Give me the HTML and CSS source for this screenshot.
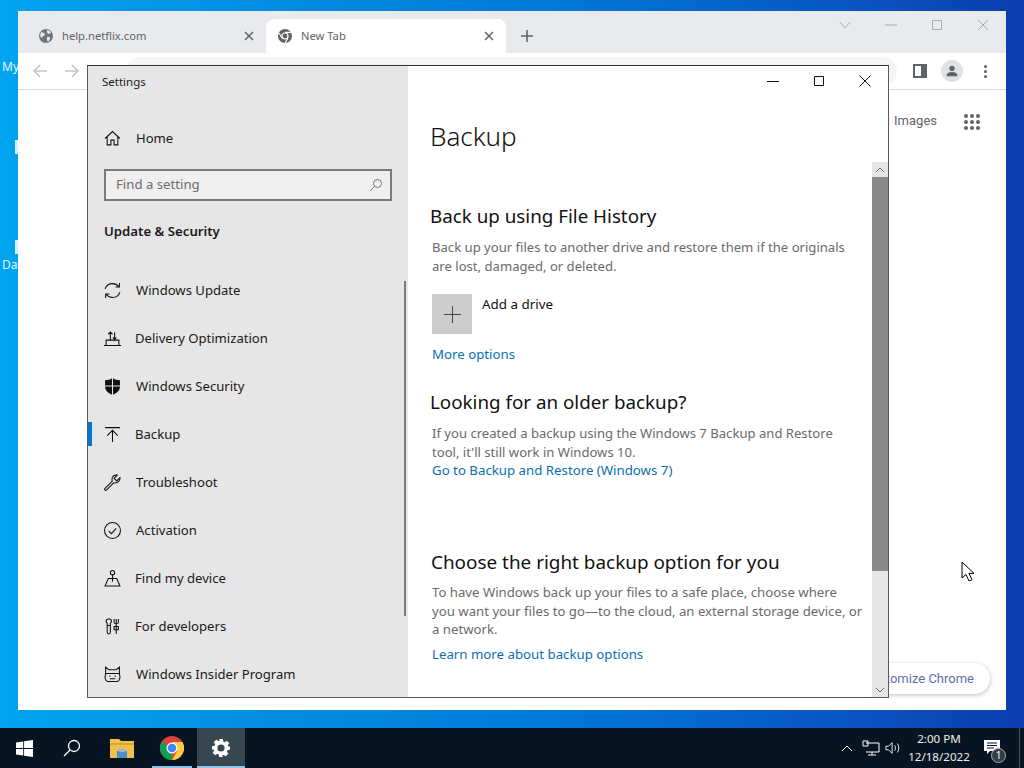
FILE: index.html

```html
<!DOCTYPE html>
<html lang="en">
<head>
<meta charset="utf-8">
<title>Settings - Backup</title>
<link rel="stylesheet" href="styles.css">
</head>
<body>

<div class="desktop">
<!-- desktop icons peeking out behind chrome -->
<span class="desk-label label-my">My</span>
<span class="desk-label label-da">Da</span>
<span class="desk-stub stub-one"></span>
<span class="desk-stub stub-two"></span>

<!-- chrome window -->
<div class="chrome">
<div class="tab-strip">
<div class="tab">
<svg class="tab-icon" viewBox="0 0 16 16"><circle cx="8" cy="8" r="7" fill="#70757a"/><path d="M3 4l3 1 1 2-2 1-1 2-2-2zM9 2l3 1 1 2-3 1-1-2zM9 9l3 0 0 2-2 3-1-2z" fill="#e8eaed"/></svg>
<span class="tab-title">help.netflix.com</span>
<svg class="tab-close" viewBox="0 0 10 10"><path d="M1 1l8 8M9 1l-8 8"/></svg>
</div>
<div class="tab tab-active">
<svg class="tab-icon" viewBox="0 0 16 16"><circle cx="8" cy="8" r="7" fill="#5f6368"/><circle cx="8" cy="8" r="3.6" fill="#fff"/><circle cx="8" cy="8" r="2.4" fill="#5f6368"/><path d="M8 4.4h6M5 10l-3-5M10.8 10.6l-3 4.6" stroke="#fff" stroke-width="1.1"/></svg>
<span class="tab-title">New Tab</span>
<svg class="tab-close" viewBox="0 0 10 10"><path d="M1 1l8 8M9 1l-8 8"/></svg>
</div>
<svg class="new-tab" viewBox="0 0 12 12"><path d="M6 0v12M0 6h12"/></svg>
<div class="chrome-caption">
<svg viewBox="0 0 12 12"><path d="M1 3l5 6 5-6"/></svg>
<svg viewBox="0 0 12 12"><path d="M0 6h12"/></svg>
<svg viewBox="0 0 12 12"><path d="M1.500 1.500h9v9h-9z"/></svg>
<svg viewBox="0 0 12 12"><path d="M1 1l10 10M11 1l-10 10"/></svg>
</div>
</div>
<div class="toolbar">
<svg class="nav-arrow" viewBox="0 0 16 16"><path d="M15 8H2M8 2L2 8l6 6"/></svg>
<svg class="nav-arrow" viewBox="0 0 16 16"><path d="M1 8h13M8 2l6 6-6 6"/></svg>
<div class="omnibox"></div>
<span class="side-panel-icon"></span>
<span class="profile">
<svg viewBox="0 0 16 16"><circle cx="8" cy="5" r="3" fill="#5f6368"/><path d="M2 13c0-3 3-4 6-4s6 1 6 4v1H2z" fill="#5f6368"/></svg>
</span>
<span class="kebab"><i></i><i></i><i></i></span>
</div>
<div class="ntp">
<div class="ntp-top">
<span class="ntp-link">Images</span>
<span class="apps-grid"><i></i><i></i><i></i><i></i><i></i><i></i><i></i><i></i><i></i></span>
</div>
<div class="customize">Customize Chrome</div>
</div>
</div>

<!-- settings window -->
<div class="settings">
<aside class="sidebar">
<div class="win-title">Settings</div>
<div class="nav-row home-row">
<svg class="nav-icon" viewBox="0 0 16 16"><path d="M1 8l7-6.500L15 8M3 6.500V14h3.500V9.500h3V14H13V6.500"/></svg>
<span>Home</span>
</div>
<div class="search-box">
<span>Find a setting</span>
<svg viewBox="0 0 14 14"><circle cx="8.500" cy="5.500" r="4"/><path d="M5.500 8.500L1 13"/></svg>
</div>
<div class="section-name">Update &amp; Security</div>
<nav class="nav-list">
<div class="nav-row">
<svg class="nav-icon" viewBox="0 0 16 16"><path d="M1 6.500C2 3.500 4.800 1.500 8 1.500c2.500 0 4.500 1 6 3M15 9.500c-1 3-3.800 5-7 5-2.500 0-4.500-1-6-3M14.500 1v3.700h-3.700M1.500 15v-3.700h3.700"/></svg>
<span>Windows Update</span>
</div>
<div class="nav-row">
<svg class="nav-icon" viewBox="0 0 16 16"><path d="M0 14.500h16M2 14.500v-5h12v5M6 9V2M4 4l2-2 2 2M10 2v7M8.500 7l1.500 2 1.500-2"/></svg>
<span class="tight">Delivery Optimization</span>
</div>
<div class="nav-row">
<svg class="nav-icon" viewBox="0 0 16 16"><path class="solid" d="M8 0c2 1.500 4.500 2 7 2v6c0 4-3.500 6.500-7 8-3.500-1.500-7-4-7-8V2c2.500 0 5-.5 7-2z"/><path class="cut" d="M8 0v16M1 7.500h14"/></svg>
<span>Windows Security</span>
</div>
<div class="nav-row nav-active">
<svg class="nav-icon" viewBox="0 0 16 16"><path d="M1 1.500h14M8 15V4M3 9l5-5 5 5"/></svg>
<span class="tight">Backup</span>
</div>
<div class="nav-row">
<svg class="nav-icon" viewBox="0 0 16 16"><path d="M15 3.500l-3 3-2.500-2.500 3-3C10 .5 7.500 2 7.500 5c0 .7.100 1.200.3 1.700L1 13.500c-.7.700-.7 1.200 0 1.600.5.400 1 .4 1.500-.1l6.800-6.800c3.500 1 6.200-2 5.700-4.700z"/></svg>
<span>Troubleshoot</span>
</div>
<div class="nav-row">
<svg class="nav-icon" viewBox="0 0 16 16"><circle cx="8" cy="8" r="7.500"/><path d="M4.500 8.500l2.500 2.500 4.500-5"/></svg>
<span>Activation</span>
</div>
<div class="nav-row">
<svg class="nav-icon" viewBox="0 0 16 16"><circle cx="8" cy="2.500" r="2"/><path d="M8 4.500V11M4 8h8l3 7H1z"/></svg>
<span class="tight">Find my device</span>
</div>
<div class="nav-row">
<svg class="nav-icon" viewBox="0 0 16 16"><path d="M4 1c-1.500 0-2 1-2 2s.7 1.500 1 2v8.500c0 2 3 2 3 0V5c.3-.5 1-1 1-2s-.5-2-2-2zM3 7h3M11.500 1v14M9.500 1v3.500c0 1 4 1 4 0V1M9.500 8h4v3h-4z"/></svg>
<span class="tight">For developers</span>
</div>
<div class="nav-row">
<svg class="nav-icon" viewBox="0 0 16 16"><path d="M1.500 1l3 2.500h7l3-2.500v7c1 2 .5 6-2 6.500H3.500c-2.500-.5-3-4.500-2-6.500zM1.500 7h13M5 9.500h1M10 9.500h1M5.500 12h5"/></svg>
<span>Windows Insider Program</span>
</div>
</nav>
<span class="sidebar-scroll"></span>
</aside>

<main class="content">
<div class="content-caption">
<svg viewBox="0 0 12 12"><path d="M0 6.500h12"/></svg>
<svg viewBox="0 0 12 12"><path d="M1.500 1.500h9v9h-9z"/></svg>
<svg viewBox="0 0 12 12"><path d="M.5.5l11 11M11.500.5l-11 11"/></svg>
</div>
<h1>Backup</h1>
<section class="block block-history">
<h2>Back up using File History</h2>
<p>Back up your files to another drive and restore them if the originals<br>are lost, damaged, or deleted.</p>
<div class="add-drive">
<span class="add-tile"><svg viewBox="0 0 17 17"><path d="M8.500 0v17M0 8.500h17"/></svg></span>
<span class="add-label">Add a drive</span>
</div>
<a class="link more-options">More options</a>
</section>
<section class="block block-older">
<h2>Looking for an older backup?</h2>
<p>If you created a backup using the Windows 7 Backup and Restore<br>tool, it'll still work in Windows 10.</p>
<a class="link go-restore">Go to Backup and Restore (Windows 7)</a>
</section>
<section class="block block-choose">
<h2>Choose the right backup option for you</h2>
<p>To have Windows back up your files to a safe place, choose where<br>you want your files to go—to the cloud, an external storage device, or<br>a network.</p>
<a class="link learn-more">Learn more about backup options</a>
</section>
<div class="scrollbar">
<svg class="scroll-arrow" viewBox="0 0 10 6"><path d="M1 5l4-4 4 4"/></svg>
<div class="scroll-thumb"></div>
<svg class="scroll-arrow arrow-down" viewBox="0 0 10 6"><path d="M1 1l4 4 4-4"/></svg>
</div>
</main>
</div>

<!-- mouse pointer -->
<svg class="cursor" viewBox="0 0 14 21"><path d="M1 1v16l4-3.500 3 6.500 3-1.300-3-6.300h5z"/></svg>

<!-- taskbar -->
<footer class="taskbar">
<div class="task-item item-start">
<svg class="start-icon" viewBox="0 0 16 16"><path d="M0 2.300l6.800-1v6.200H0zM7.600 1.200L16 0v7.500H7.600zM0 8.400h6.800v6.300L0 13.700zM7.600 8.400H16V16l-8.400-1.200z" fill="#fff"/></svg>
</div>
<div class="task-item">
<svg class="task-search" viewBox="0 0 18 18"><circle cx="11" cy="7" r="5.500"/><path d="M7 11l-6 6"/></svg>
</div>
<div class="task-item">
<svg class="task-app" viewBox="0 0 24 20"><path d="M0 1h9l2 2h13v17H0z" fill="#f0c14b"/><path d="M0 5h24v2H0z" fill="#dba62e"/><path d="M7 13h10v7H7z" fill="#4d8fc9"/><path d="M9 11h6v3H9z" fill="#8cb8dc"/></svg>
</div>
<div class="task-item item-running">
<svg class="task-app" viewBox="0 0 24 24"><circle cx="12" cy="12" r="12" fill="#db4437"/><path d="M12 12L1.600 6A12 12 0 0 0 12 24z" fill="#0f9d58"/><path d="M12 6h10.400A12 12 0 0 1 12 24l5.200-9z" fill="#ffcd40"/><circle cx="12" cy="12" r="5.500" fill="#fff"/><circle cx="12" cy="12" r="4.300" fill="#4285f4"/></svg>
</div>
<div class="task-item item-active">
<svg class="task-gear" viewBox="0 0 20 20"><path fill-rule="evenodd" d="M8 0h4l.5 2.800 1.700.7 2.300-1.600 2.800 2.800-1.600 2.300.7 1.700L20 8v4l-2.800.5-.7 1.700 1.600 2.300-2.800 2.800-2.300-1.600-1.700.7L12 20H8l-.5-2.800-1.700-.7-2.300 1.600-2.800-2.800 1.600-2.300-.7-1.700L0 12V8l2.800-.5.7-1.700-1.600-2.300 2.800-2.800 2.300 1.600 1.700-.7zM10 6a4 4 0 1 0 0 8 4 4 0 0 0 0-8z" fill="#fff"/></svg>
</div>
<div class="tray">
<svg class="tray-caret" viewBox="0 0 12 7"><path d="M1 6l5-5 5 5"/></svg>
<svg class="tray-net" viewBox="0 0 18 16"><path d="M4 3h13v9H4M10 12v3M6 15h8M1 1h5v5H1z"/></svg>
<svg class="tray-vol" viewBox="0 0 18 14"><path d="M1 5h3l4-4v12l-4-4H1zM11 4c1 2 1 4 0 6M14 2c2 3 2 7 0 10"/></svg>
<div class="clock"><span>2:00 PM</span><span>12/18/2022</span></div>
<div class="notify">
<svg viewBox="0 0 16 15"><path d="M0 0h16v11H6l-3 3v-3H0z" fill="#fff"/><path d="M3 3h10M3 5.500h10M3 8h7" stroke="#0a1622"/></svg>
<span class="notify-count">1</span>
</div>
<span class="show-desktop"></span>
</div>
</footer>
</div>

</body>
</html>
```

FILE: styles.css

```css
* {
margin: 0;
padding: 0;
box-sizing: border-box;
}

body {
width: 1024px;
height: 768px;
overflow: hidden;
font-family: "Noto Sans", "Open Sans", sans-serif;
}

.desktop {
position: relative;
width: 1024px;
height: 768px;
background: linear-gradient(90deg, #00a4ef 0%, #0599e8 12%, #0078d7 55%, #0a52c0 85%, #0a3cae 100%);
}

.desk-label {
position: absolute;
left: 2px;
font-size: 12px;
color: #e6f6ff;
}

.label-my { top: 58px; }
.label-da { top: 256px; }

.desk-stub {
position: absolute;
left: 15px;
width: 3px;
height: 14px;
background: #d8f0ff;
}

.stub-one { top: 140px; }
.stub-two { top: 240px; }

/* chrome */
.chrome {
position: absolute;
left: 18px;
top: 11px;
width: 988px;
height: 699px;
background: #fff;
}

.tab-strip {
display: flex;
align-items: flex-end;
height: 42px;
padding-left: 8px;
background: #e8eaed;
position: relative;
}

.tab {
display: flex;
align-items: center;
width: 240px;
height: 34px;
padding: 0 12px 0 12px;
font-size: 11.200px;
color: #5f6368;
}

.tab-active {
background: #fff;
border-radius: 8px 8px 0 0;
padding-left: 11px;
}

.tab-icon {
width: 16px;
height: 16px;
flex: none;
}

.tab-title {
flex: 1;
margin-left: 8px;
padding-bottom: 2px;
}

.tab-close {
width: 10px;
height: 10px;
fill: none;
stroke: #5f6368;
stroke-width: 1.500;
}

.new-tab {
width: 12px;
height: 12px;
margin: 0 0 11px 15px;
fill: none;
stroke: #5f6368;
stroke-width: 1.600;
}

.chrome-caption {
position: absolute;
top: 8px;
right: 17px;
display: flex;
gap: 34px;
}

.chrome-caption svg {
width: 12px;
height: 12px;
fill: none;
stroke: #a9abae;
stroke-width: 1;
}

.toolbar {
display: flex;
align-items: center;
height: 37px;
padding: 0 19px 0 14px;
border-bottom: 1px solid #dadce0;
}

.nav-arrow {
width: 16px;
height: 16px;
margin-right: 16px;
fill: none;
stroke: #c4c7ca;
stroke-width: 1.600;
}

.omnibox {
flex: 1;
height: 28px;
margin: 0 16px 0 30px;
border-radius: 14px;
background: #f4f5f6;
}

.side-panel-icon {
width: 14px;
height: 14px;
margin-right: 14px;
border: 2px solid #5f6368;
border-right-width: 6px;
}

.profile {
display: flex;
align-items: center;
justify-content: center;
width: 22px;
height: 22px;
margin-right: 21px;
border-radius: 50%;
background: #dfe1e5;
}

.profile svg {
width: 14px;
height: 14px;
}

.kebab {
display: flex;
flex-direction: column;
gap: 2px;
}

.kebab i {
width: 3px;
height: 3px;
border-radius: 50%;
background: #5f6368;
}

.ntp {
position: relative;
height: 620px;
}

.ntp-top {
display: flex;
justify-content: flex-end;
align-items: center;
gap: 27px;
padding: 24px 26px 0 0;
}

.ntp-link {
margin-top: -3px;
font-family: "Roboto", sans-serif;
font-size: 13px;
color: #5f6368;
}

.apps-grid {
display: grid;
grid-template-columns: repeat(3, 4px);
gap: 2px;
}

.apps-grid i {
width: 4px;
height: 4px;
border-radius: 50%;
background: #5f6368;
}

.customize {
position: absolute;
right: 16px;
bottom: 16px;
height: 31px;
padding: 0 16px;
font-family: "Roboto", sans-serif;
font-size: 13px;
line-height: 31px;
color: #5d70a8;
background: #fff;
border-radius: 16px;
box-shadow: 0 1px 4px rgba(60, 64, 67, 0.35);
}

/* settings */
.settings {
position: absolute;
left: 87px;
top: 65px;
width: 802px;
height: 633px;
display: flex;
background: #fff;
border: 1px solid #5a5a5a;
border-top-color: #333;
}

.sidebar {
position: relative;
width: 320px;
flex: none;
padding-left: 16px;
background: #e6e6e6;
color: #1a1a1a;
}

.win-title {
height: 32px;
padding-top: 7px;
margin-left: -2px;
font-size: 11.500px;
line-height: 18px;
}

.nav-row {
display: flex;
align-items: center;
height: 48px;
font-size: 13.100px;
}

.nav-row span {
margin-left: 15px;
}

.nav-row .tight {
margin-left: 14px;
}

.home-row {
height: 40px;
margin-top: 20px;
}

.nav-icon {
width: 17px;
height: 17px;
flex: none;
fill: none;
stroke: #111;
stroke-width: 1;
}

.nav-icon .solid {
fill: #111;
stroke: none;
}

.nav-icon .cut {
stroke: #e6e6e6;
}

.nav-active {
position: relative;
}

.nav-active::before {
content: "";
position: absolute;
left: -16px;
top: 12px;
width: 4px;
height: 24px;
background: #0078d7;
}

.search-box {
display: flex;
align-items: center;
justify-content: space-between;
width: 288px;
height: 32px;
margin-top: 11px;
padding: 0 7px 3px 10px;
font-size: 13.200px;
color: #6b6b6b;
background: #efefef;
border: 2px solid #7a7a7a;
}

.search-box svg {
width: 14px;
height: 14px;
margin-top: 3px;
fill: none;
stroke: #777;
}

.section-name {
margin-top: 20px;
font-size: 13.200px;
font-weight: 600;
line-height: 20px;
}

.nav-list {
margin-top: 25px;
}

.sidebar-scroll {
position: absolute;
left: 316px;
top: 215px;
width: 2px;
height: 335px;
background: #7b7b7b;
}

.content {
position: relative;
flex: 1;
padding-left: 22px;
color: #111;
}

.content-caption {
position: absolute;
top: 9px;
right: 17px;
display: flex;
gap: 34px;
}

.content-caption svg {
width: 12px;
height: 12px;
fill: none;
stroke: #111;
stroke-width: 1;
}

h1 {
margin-top: 49px;
font-size: 26px;
font-weight: 300;
line-height: 42px;
}

h2 {
font-size: 18.800px;
font-weight: 400;
line-height: 26px;
}

.block p {
margin: 9px 0 0 2px;
font-size: 13.100px;
line-height: 18.500px;
color: #6a6a6a;
}

.block-history {
margin-top: 46px;
}

.block-older {
margin-top: 25px;
}

.block-choose {
margin-top: 69px;
}

.block-choose h2 {
margin-left: 1px;
font-size: 18.900px;
}

.block-choose p {
margin-top: 8px;
font-size: 13.200px;
}

.add-drive {
display: flex;
margin: 19px 0 0 2px;
}

.add-tile {
display: flex;
align-items: center;
justify-content: center;
width: 40px;
height: 40px;
background: #cccccc;
}

.add-tile svg {
width: 17px;
height: 17px;
fill: none;
stroke: #444;
}

.add-label {
margin-left: 10px;
font-size: 13.400px;
line-height: 20px;
}

.link {
display: block;
margin-left: 2px;
font-size: 13.250px;
line-height: 20px;
color: #0a6fb0;
}

.more-options {
margin-top: 10px;
}

.go-restore {
margin-top: -1px;
}

.learn-more {
margin-top: 5px;
}

.scrollbar {
position: absolute;
right: 0;
top: 96px;
bottom: 0;
width: 16px;
display: flex;
flex-direction: column;
align-items: center;
background: #e6e6e6;
}

.scroll-arrow {
width: 10px;
height: 6px;
margin: 5px 0 4px;
fill: none;
stroke: #666;
}

.arrow-down {
margin-top: auto;
}

.scroll-thumb {
align-self: stretch;
height: 394px;
background: #8a8a8a;
}

.cursor {
position: absolute;
left: 961px;
top: 561px;
width: 14px;
height: 21px;
fill: #fff;
stroke: #000;
stroke-width: 1;
}

/* taskbar */
.taskbar {
position: absolute;
left: 0;
bottom: 0;
width: 1024px;
height: 40px;
display: flex;
background: #071522;
}

.task-item {
display: flex;
align-items: center;
justify-content: center;
width: 48px;
height: 40px;
margin-right: 2px;
position: relative;
}

.item-start {
margin-right: 0;
}

.start-icon {
width: 17px;
height: 17px;
}

.task-search {
width: 18px;
height: 18px;
fill: none;
stroke: #fff;
stroke-width: 1.300;
}

.task-app {
width: 24px;
height: 24px;
}

.item-running {
margin-right: 1px;
}

.item-running::after,
.item-active::after {
content: "";
position: absolute;
left: 4px;
right: 4px;
bottom: 0;
height: 2px;
background: #8fc4e8;
}

.item-active {
background: #37474f;
}

.item-active::after {
left: 0;
right: 0;
}

.task-gear {
width: 18px;
height: 18px;
}

.tray {
flex: 1;
display: flex;
align-items: center;
justify-content: flex-end;
color: #fff;
}

.tray svg {
fill: none;
stroke: #fff;
}

.tray-caret {
width: 12px;
height: 7px;
margin-right: 9px;
}

.tray-net {
width: 18px;
height: 16px;
margin-right: 5px;
}

.tray-vol {
width: 16px;
height: 14px;
}

.clock {
display: flex;
flex-direction: column;
align-items: center;
width: 52px;
margin-left: 12px;
font-size: 11.600px;
line-height: 18px;
white-space: nowrap;
color: #eee;
}

.notify {
position: relative;
width: 54px;
height: 40px;
display: flex;
align-items: center;
justify-content: center;
}

.notify svg {
width: 16px;
height: 15px;
stroke: none;
margin-top: -2px;
}

.notify-count {
position: absolute;
left: 26px;
top: 20px;
width: 15px;
height: 15px;
border-radius: 50%;
background: #333d46;
border: 1px solid #aaa;
font-size: 10px;
line-height: 13px;
text-align: center;
}

.show-desktop {
width: 5px;
height: 40px;
border-left: 1px solid #4a545c;
}
```
